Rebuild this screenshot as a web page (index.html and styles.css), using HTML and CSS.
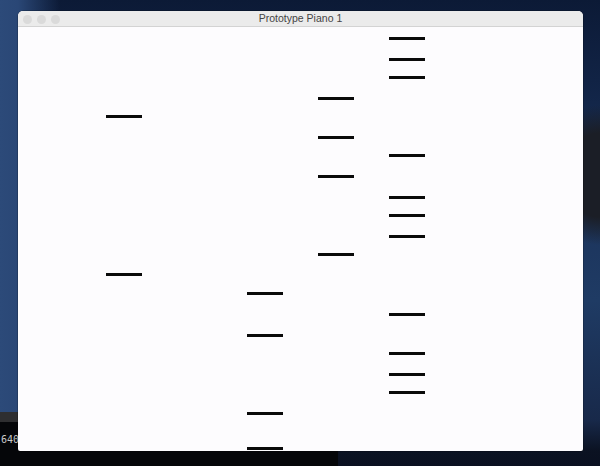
FILE: index.html
```html
<!DOCTYPE html>
<html>
<head>
<meta charset="utf-8">
<link rel="stylesheet" href="styles.css">
</head>
<body>
<div class="desktop">
  <div class="terminal">
    <div class="term-bar"></div>
    <div class="term-body"><span class="term-text">640</span></div>
  </div>
  <div class="window">
    <div class="titlebar">
      <div class="lights">
        <span class="light"></span>
        <span class="light"></span>
        <span class="light"></span>
      </div>
      <div class="title">Prototype Piano 1</div>
    </div>
    <div class="canvas">
      <div class="note c1" style="top:88px"></div>
      <div class="note c1" style="top:246px"></div>

      <div class="note c2" style="top:265px"></div>
      <div class="note c2" style="top:307px"></div>
      <div class="note c2" style="top:385px"></div>
      <div class="note c2" style="top:420px"></div>

      <div class="note c3" style="top:70px"></div>
      <div class="note c3" style="top:109px"></div>
      <div class="note c3" style="top:148px"></div>
      <div class="note c3" style="top:226px"></div>

      <div class="note c4" style="top:10px"></div>
      <div class="note c4" style="top:31px"></div>
      <div class="note c4" style="top:49px"></div>
      <div class="note c4" style="top:127px"></div>
      <div class="note c4" style="top:169px"></div>
      <div class="note c4" style="top:187px"></div>
      <div class="note c4" style="top:208px"></div>
      <div class="note c4" style="top:286px"></div>
      <div class="note c4" style="top:325px"></div>
      <div class="note c4" style="top:346px"></div>
      <div class="note c4" style="top:364px"></div>
    </div>
  </div>
</div>
</body>
</html>
```
FILE: styles.css
```css
html, body {
  margin: 0;
  padding: 0;
}
body {
  width: 600px;
  height: 466px;
  overflow: hidden;
  font-family: "Liberation Sans", Arial, sans-serif;
}
.desktop {
  position: relative;
  width: 600px;
  height: 466px;
  overflow: hidden;
  padding: 11px 17px 15px 18px;
  box-sizing: border-box;
  background:
    radial-gradient(ellipse 60px 70px at 600px 175px, #1b1e26 0%, #1b1e26 60%, rgba(27,30,38,0) 100%),
    linear-gradient(to right, #2c4a79 0px, #2a4776 18px, rgba(20,36,70,0) 60px),
    linear-gradient(to bottom, #0c1a36 0px, #112345 80px, #1b335b 200px, #1f3b64 300px, #18294a 420px, #0b1222 451px, #0a1020 466px);
}
.terminal {
  position: absolute;
  left: 0;
  top: 412px;
  width: 338px;
  height: 54px;
  display: flex;
  flex-direction: column;
}
.term-bar {
  height: 10px;
  background: #2e2e30;
}
.term-body {
  flex: 1;
  background: #050609;
  padding: 7px 0 0 1px;
}
.term-text {
  font-family: "DejaVu Sans Mono", "Liberation Mono", monospace;
  font-size: 10px;
  color: #c9c9c9;
  line-height: 12px;
}
.window {
  position: relative;
  height: 100%;
  display: flex;
  flex-direction: column;
  background: #fdfcfe;
  border-radius: 5px 5px 2px 2px;
  overflow: hidden;
  box-shadow: 0 0 0 0.5px rgba(0,0,0,0.35);
}
.titlebar {
  position: relative;
  height: 15px;
  flex: none;
  background: #ebebeb;
  border-bottom: 1px solid #d3d3d3;
  display: flex;
  align-items: center;
  justify-content: center;
}
.lights {
  position: absolute;
  left: 5px;
  top: 4px;
  display: flex;
  gap: 5px;
}
.light {
  width: 9px;
  height: 9px;
  border-radius: 50%;
  background: #dadada;
}
.title {
  font-size: 10.5px;
  color: #444;
  line-height: 15px;
}
.canvas {
  position: relative;
  flex: 1;
}
.note {
  position: absolute;
  width: 36px;
  height: 3px;
  background: #0a0a0a;
}
.c1 { left: 88px; }
.c2 { left: 229px; }
.c3 { left: 300px; }
.c4 { left: 371px; }
```
